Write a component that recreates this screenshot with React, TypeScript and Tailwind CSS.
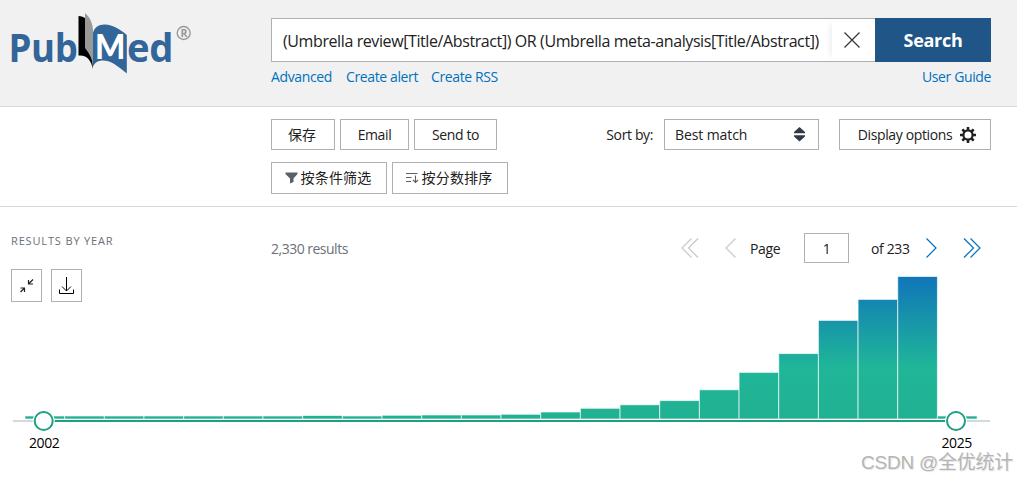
import type { ReactNode } from 'react';

const BARS = [416, 416, 416, 416, 416, 416, 416, 415.5, 416, 415.3, 415, 415, 414.3, 412, 408.3, 404.8, 400.6, 389.8, 372.4, 353.6, 320.4, 299.4, 276.5, 416];

const SANS = "font-['Open_Sans','Noto_Sans_CJK_SC',sans-serif]";

interface ButtonProps {
  className: string;
  children: ReactNode;
}

function OutlineButton({ className, children }: ButtonProps) {
  return (
    <button
      type="button"
      className={`flex shrink-0 items-center justify-center whitespace-nowrap border border-[#aeb0b5] bg-white ${className}`}
    >
      {children}
    </button>
  );
}

function Logo() {
  return (
    <svg width="196" height="76" viewBox="-4 0 196 76" className="-ml-[5px] shrink-0">
      <g fill="#326599" fontFamily="Open Sans, sans-serif" fontWeight="700">
        <text x="-1.500" y="61.500" fontSize="40" textLength="69" lengthAdjust="spacingAndGlyphs">Pub</text>
        <text x="117" y="61.500" fontSize="38.500" textLength="46" lengthAdjust="spacingAndGlyphs">ed</text>
      </g>
      <path d="M68.500 16 Q72 16 75 18 L80 46 Q83 52 82.800 69 C81.500 61 77 54.500 68.500 55.500Z" fill="#000" />
      <path d="M75 13 C80 17 83 24 83 31 V66 C82.500 60 80 54 75 48Z" fill="#999" />
      <path d="M83 33 C84.500 27 89 24.300 95 24.500 C103 25 110 29 116.800 35 V73.500 C107 65 100 60.500 93 60.500 C88 60.500 85 62.500 83 66.500Z" fill="#326599" />
      <text x="85" y="58.800" fontSize="33.500" fontFamily="Lato, sans-serif" fontWeight="900" fill="#fff" textLength="30" lengthAdjust="spacingAndGlyphs">M</text>
      <circle cx="173.700" cy="33" r="6.500" fill="none" stroke="#999" strokeWidth="1.400" />
      <text x="170.400" y="36.800" fontSize="10.500" fontFamily="Open Sans, sans-serif" fontWeight="700" fill="#999">R</text>
    </svg>
  );
}

function Header() {
  return (
    <header className="flex h-[107px] border-b border-[#d6d7d9] bg-[#f1f1f1] pl-[11px] pr-[26px]">
      <div className="w-[260px] shrink-0">
        <Logo />
      </div>
      <div className="min-w-0 flex-1 pt-[18px]">
        <div className="flex h-11">
          <div className="flex min-w-0 flex-1 items-center border border-r-0 border-[#aeb0b5] bg-white">
            <span className="flex-1 whitespace-nowrap pl-[11px] pt-[2px] text-[16px] tracking-[-0.4px]">
              (Umbrella review[Title/Abstract]) OR (Umbrella meta-analysis[Title/Abstract])
            </span>
            <span className="flex h-9 w-[43px] shrink-0 items-center justify-center bg-white pr-1 shadow-[-4px_0_5px_-2px_rgba(0,0,0,0.07)]">
              <svg width="16" height="16" viewBox="0 0 16 16" stroke="#333" strokeWidth="1.200">
                <path d="M.5 .5 15.500 15.500M15.500 .5 .5 15.500" />
              </svg>
            </span>
          </div>
          <button type="button" className="w-[116px] shrink-0 bg-[#205588] text-[18px] font-bold tracking-[-0.3px] text-white">
            Search
          </button>
        </div>
        <nav className="mt-[5px] flex leading-5 text-[#0071bc]">
          <a className="w-[75px]">Advanced</a>
          <a className="w-[85px] whitespace-nowrap">Create alert</a>
          <a>Create RSS</a>
          <a className="ml-auto">User Guide</a>
        </nav>
      </div>
    </header>
  );
}

function Toolbar() {
  return (
    <section className="flex h-[100px] flex-col gap-3 border-b border-[#d6d7d9] pl-[271px] pr-[26px] pt-3">
      <div className="flex h-[31px]">
        <OutlineButton className="mr-[5px] w-16 pr-[2px] tracking-normal">保存</OutlineButton>
        <OutlineButton className="mr-[5px] w-[69px]">Email</OutlineButton>
        <OutlineButton className="w-[83px]">Send to</OutlineButton>
        <div className="ml-auto flex items-center">
          <label className="mr-[11px]">Sort by:</label>
          <OutlineButton className="mr-5 h-[31px] w-[155px] !justify-start pl-[10px] pr-[13px] tracking-[-0.1px]">
            <span>Best match</span>
            <svg className="ml-auto" width="11" height="15" viewBox="0 0 11 15" fill="#323a45">
              <path d="M5.500 0 11 5V6.300H0V5ZM0 8.300H11V9.500L5.500 14.500 0 9.500Z" />
            </svg>
          </OutlineButton>
          <OutlineButton className="h-[31px] w-[152px] gap-2 pl-[4px]">
            <span>Display options</span>
            <svg width="16" height="16" viewBox="0 0 16 16" fill="none" stroke="#212121">
              <circle cx="8" cy="8" r="4.600" strokeWidth="2.200" />
              <path d="M8 0V3M8 13V16M0 8H3M13 8H16M2.300 2.300 4.500 4.500M11.500 11.500 13.700 13.700M2.300 13.700 4.500 11.500M11.500 4.500 13.700 2.300" strokeWidth="2.600" />
            </svg>
          </OutlineButton>
        </div>
      </div>
      <div className="flex h-8 gap-[5px]">
        <OutlineButton className="w-[116px] gap-[3px] pb-[2px] pr-[2px] tracking-[0.2px]">
          <svg className="mt-[2px]" width="13" height="12" viewBox="0 0 13 12" fill="#5b616b">
            <path d="M.5 .5H12.500V2L8.500 6.500V10L5 11.500V6.500L.5 2Z" />
          </svg>
          <span>按条件筛选</span>
        </OutlineButton>
        <OutlineButton className="w-[116px] gap-[3px] pb-[2px] pr-[2px] tracking-[0.2px]">
          <svg className="mt-[2px]" width="13" height="12" viewBox="0 0 13 12" fill="none" stroke="#5b616b" strokeWidth="1.100">
            <path d="M0 1.500H11.500M0 5.500H5.500M0 9.500H5M9.500 3.500V10.500M7 8 9.500 10.500 12 8" />
          </svg>
          <span>按分数排序</span>
        </OutlineButton>
      </div>
    </section>
  );
}

function Pagination() {
  return (
    <div className="flex h-[30px] items-center">
      <svg width="18" height="20" viewBox="0 0 18 20" fill="none" stroke="#c8c8c8" strokeWidth="1.200">
        <path d="M10.500 .5 1 10 10.500 19.500M17 .5 7.500 10 17 19.500" />
      </svg>
      <svg className="ml-[26px]" width="11" height="20" viewBox="0 0 11 20" fill="none" stroke="#c8c8c8" strokeWidth="1.200">
        <path d="M10.500 .5 1 10 10.500 19.500" />
      </svg>
      <span className="ml-[14px] w-[54px]">Page</span>
      <span className="flex h-[30px] w-[45px] items-center justify-center border border-[#aeb0b5]">1</span>
      <span className="ml-[22px] w-[55px] whitespace-nowrap">of 233</span>
      <svg width="11" height="20" viewBox="0 0 11 20" fill="none" stroke="#0071bc" strokeWidth="1.200">
        <path d="M.5 .5 10 10 .5 19.500" />
      </svg>
      <svg className="ml-[26px]" width="18" height="20" viewBox="0 0 18 20" fill="none" stroke="#0071bc" strokeWidth="1.200">
        <path d="M1 .5 10.500 10 1 19.500M7.500 .5 17 10 7.500 19.500" />
      </svg>
    </div>
  );
}

function YearChart() {
  return (
    <svg width="1017" height="165" viewBox="0 270 1017 165">
      <defs>
        <linearGradient id="years" gradientUnits="userSpaceOnUse" x1="0" y1="276" x2="0" y2="419">
          <stop offset="0" stopColor="#1075ba" />
          <stop offset="0.640" stopColor="#20b698" />
          <stop offset="1" stopColor="#20b192" />
        </linearGradient>
      </defs>
      <g fill="url(#years)" stroke="#fff" strokeOpacity="0.650">
        {BARS.map((top, i) => (
          <rect key={i} x={25 + i * 39.67} y={top} width="39.670" height={419 - top} />
        ))}
      </g>
      <path d="M13 421H990" stroke="#d8d8d8" strokeWidth="2" />
      <path d="M44 421H956" stroke="#20a083" strokeWidth="2" />
      {[43.7, 956].map((x) => (
        <g key={x} fill="#fff">
          <circle cx={x} cy="421" r="11" />
          <circle cx={x} cy="421" r="9" stroke="#20a083" strokeWidth="2" />
        </g>
      ))}
    </svg>
  );
}

function Results() {
  return (
    <section className="grid grid-cols-[1017px]">
      <div className="col-start-1 row-start-1 flex pl-[11px]">
        <div className="w-[260px] pt-[26px]">
          <h3 className="text-[11px] leading-4 tracking-[0.85px] text-[#6b7078]">RESULTS BY YEAR</h3>
          <div className="mt-5 flex gap-[9px]">
            <OutlineButton className="h-[33px] w-[31px]">
              <svg width="15" height="16" viewBox="0 0 15 16" fill="none" stroke="#212121" strokeWidth="1.200">
                <path d="M14 1.500 9.500 6M9.500 2V6H14M1.500 14 5.500 10M1.500 10H5.500V14" />
              </svg>
            </OutlineButton>
            <OutlineButton className="h-[33px] w-[31px]">
              <svg width="16" height="18" viewBox="0 0 16 18" fill="none" stroke="#000" strokeWidth="1">
                <path d="M7.500 0V14M3 9.500 7.500 14 12 9.500M.5 12.500V16.500H14.500V12.500" />
              </svg>
            </OutlineButton>
          </div>
        </div>
        <span className="w-[410px] pt-8 leading-5 tracking-[-0.5px] text-[#6b7078]">2,330 results</span>
        <div className="pt-[26px]">
          <Pagination />
        </div>
      </div>
      <div className="col-start-1 row-start-1 pt-[63px]">
        <YearChart />
        <div className="-mt-[2px] flex justify-between pl-[29px] pr-[45px] leading-5 text-black">
          <span>2002</span>
          <span>2025</span>
        </div>
      </div>
    </section>
  );
}

export default function App() {
  return (
    <div className={`relative h-[481px] w-[1017px] overflow-hidden bg-white text-[14px] tracking-[-0.38px] text-[#212121] ${SANS}`}>
      <Header />
      <Toolbar />
      <Results />
      <span className="absolute bottom-[4px] right-[4px] whitespace-nowrap font-['Liberation_Sans','Noto_Sans_CJK_SC',sans-serif] text-[19px] leading-7 tracking-[-0.25px] text-[#b5b5b5] [text-shadow:1px_1px_1px_#e5e5e5]">
        CSDN @全优统计
      </span>
    </div>
  );
}
